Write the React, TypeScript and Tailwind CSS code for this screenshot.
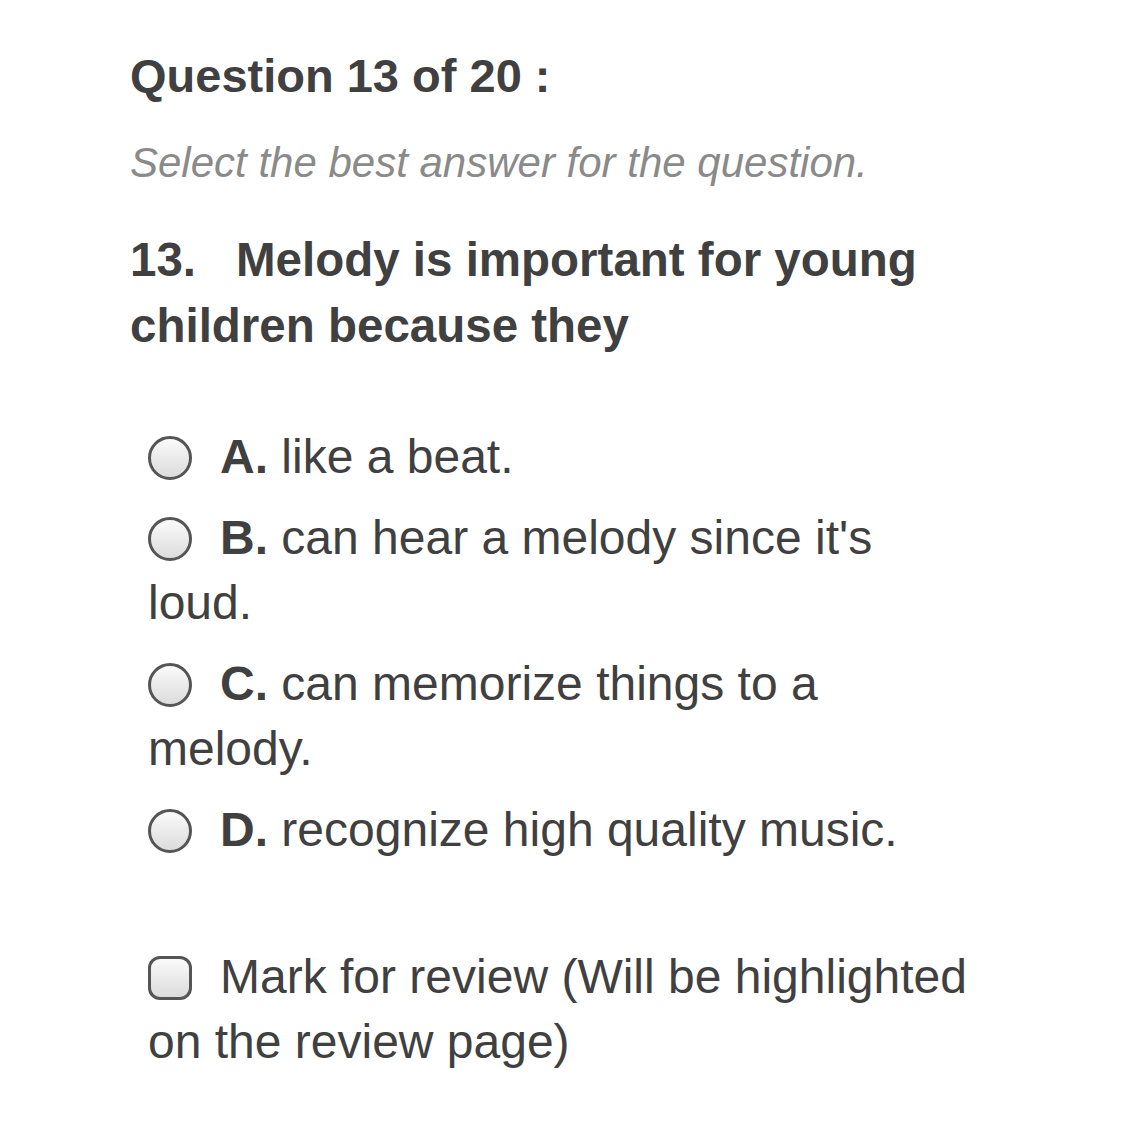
import React from 'react';

const options = [
  { key: 'A', text: 'like a beat.' },
  { key: 'B', text: "can hear a melody since it's loud." },
  { key: 'C', text: 'can memorize things to a melody.' },
  { key: 'D', text: 'recognize high quality music.' },
];

// radio / checkbox drawn with CSS so they keep the glossy iOS look
const Radio = () => (
  <span className="inline-block w-[44px] h-[44px] rounded-full border-[3px] border-[#555] bg-gradient-to-b from-[#fafafa] to-[#dcdcdc] align-middle mr-[28px] -mt-[4px]" />
);

const Check = () => (
  <span className="inline-block w-[44px] h-[44px] rounded-[12px] border-[3px] border-[#555] bg-gradient-to-b from-[#fafafa] to-[#dcdcdc] align-middle mr-[28px] -mt-[4px]" />
);

export default function App() {
  return (
    <div className="min-h-screen bg-white font-['Liberation_Sans',Arial,sans-serif] text-[#404040]">
      <div className="w-[846px] pl-[130px] pt-[48px] box-content">
        <h1 className="text-[47px] leading-[56px] font-bold">Question 13 of 20 :</h1>

        <p className="mt-[34px] text-[42px] leading-[50px] italic text-[#8a8a8a]">
          Select the best answer for the question.
        </p>

        <p className="mt-[39px] text-[47.5px] leading-[66px] font-bold">
          <span className="inline-block w-[106px]">13.</span>Melody is important for young children because they
        </p>

        <div className="mt-[65px] pl-[18px] flex flex-col gap-[16px]">
          {options.map((o) => (
            <label key={o.key} className="block text-[48px] leading-[65px]">
              <Radio />
              <span className="font-bold">{o.key}.</span> {o.text}
            </label>
          ))}
        </div>

        <div className="mt-[82px] pl-[18px]">
          <label className="block text-[48px] leading-[65px]">
            <Check />
            Mark for review (Will be highlighted on the review page)
          </label>
        </div>
      </div>
    </div>
  );
}
